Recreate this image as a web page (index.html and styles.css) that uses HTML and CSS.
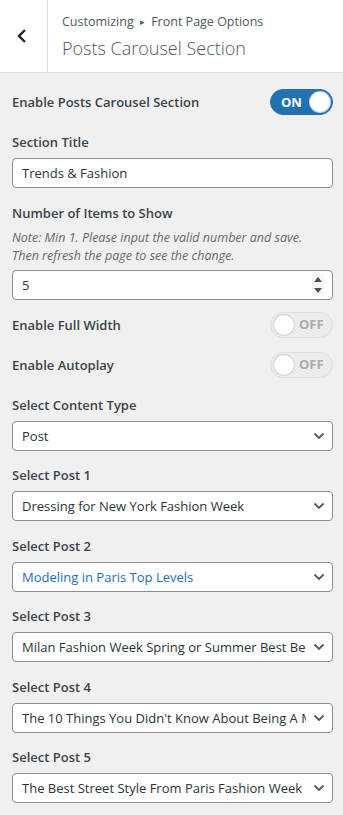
FILE: index.html
```html
<!DOCTYPE html>
<html lang="en">
<head>
    <title>Posts Carousel Section</title>
    <link rel="stylesheet" href="styles.css">
</head>
<body>
    <div class="panel-head">
        <button type="button" class="back-button" aria-label="Back">
            <svg width="12" height="16" viewBox="0 0 12 16"><polyline points="9,2 3,8 9,14" fill="none" stroke="#1d2327" stroke-width="2.4"/></svg>
        </button>
        <div class="panel-title">
            <span class="crumb">Customizing <span class="crumb-arrow">&#9656;</span> Front Page Options</span>
            <h3>Posts Carousel Section</h3>
        </div>
    </div>

    <div class="controls">
        <div class="toggle-row first">
            <span class="control-title">Enable Posts Carousel Section</span>
            <span class="switch on"><span class="switch-text">ON</span><span class="knob"></span></span>
        </div>

        <div class="control">
            <label for="title" class="control-title">Section Title</label>
            <input type="text" id="title" class="form_input" value="Trends &amp; Fashion">
        </div>

        <div class="control tight">
            <label for="items" class="control-title">Number of Items to Show</label>
            <p class="note">Note: Min 1. Please input the valid number and save.<br>Then refresh the page to see the change.</p>
            <div class="field">
                <input type="text" id="items" class="form_input" value="5">
                <span class="spinner"><span class="up"></span><span class="down"></span></span>
            </div>
        </div>

        <div class="toggle-row">
            <span class="control-title">Enable Full Width</span>
            <span class="switch"><span class="knob"></span><span class="switch-text">OFF</span></span>
        </div>

        <div class="toggle-row last">
            <span class="control-title">Enable Autoplay</span>
            <span class="switch"><span class="knob"></span><span class="switch-text">OFF</span></span>
        </div>

        <div class="control">
            <label for="type" class="control-title">Select Content Type</label>
            <div class="field">
                <select id="type" class="form_select"><option>Post</option></select>
                <svg class="chevron" width="12" height="8" viewBox="0 0 12 8"><polyline points="1.5,1.5 6,6 10.5,1.5" fill="none" stroke="#50575e" stroke-width="1.8"/></svg>
            </div>
        </div>

        <div class="control">
            <label for="post1" class="control-title">Select Post 1</label>
            <div class="field">
                <select id="post1" class="form_select"><option>Dressing for New York Fashion Week</option></select>
                <svg class="chevron" width="12" height="8" viewBox="0 0 12 8"><polyline points="1.5,1.5 6,6 10.5,1.5" fill="none" stroke="#50575e" stroke-width="1.8"/></svg>
            </div>
        </div>

        <div class="control">
            <label for="post2" class="control-title">Select Post 2</label>
            <div class="field">
                <select id="post2" class="form_select hover"><option>Modeling in Paris Top Levels</option></select>
                <svg class="chevron" width="12" height="8" viewBox="0 0 12 8"><polyline points="1.5,1.5 6,6 10.5,1.5" fill="none" stroke="#50575e" stroke-width="1.8"/></svg>
            </div>
        </div>

        <div class="control">
            <label for="post3" class="control-title">Select Post 3</label>
            <div class="field">
                <select id="post3" class="form_select"><option>Milan Fashion Week Spring or Summer Best Bets</option></select>
                <svg class="chevron" width="12" height="8" viewBox="0 0 12 8"><polyline points="1.5,1.5 6,6 10.5,1.5" fill="none" stroke="#50575e" stroke-width="1.8"/></svg>
            </div>
        </div>

        <div class="control">
            <label for="post4" class="control-title">Select Post 4</label>
            <div class="field">
                <select id="post4" class="form_select"><option>The 10 Things You Didn't Know About Being A Model</option></select>
                <svg class="chevron" width="12" height="8" viewBox="0 0 12 8"><polyline points="1.5,1.5 6,6 10.5,1.5" fill="none" stroke="#50575e" stroke-width="1.8"/></svg>
            </div>
        </div>

        <div class="control">
            <label for="post5" class="control-title">Select Post 5</label>
            <div class="field">
                <select id="post5" class="form_select"><option>The Best Street Style From Paris Fashion Week</option></select>
                <svg class="chevron" width="12" height="8" viewBox="0 0 12 8"><polyline points="1.5,1.5 6,6 10.5,1.5" fill="none" stroke="#50575e" stroke-width="1.8"/></svg>
            </div>
        </div>
    </div>
</body>
</html>
```

FILE: styles.css
```css
body{
    margin: 0;
    background-color: #f0f0f1;
    font-family: "Open Sans", "Noto Sans", sans-serif;
    color: #3c434a;
}
.panel-head{
    display: flex;
    height: 72px;
    background-color: #fff;
    border-bottom: 1px solid #dcdcde;
}
.back-button{
    width: 48px;
    padding: 0;
    border: none;
    border-right: 1px solid #dcdcde;
    background-color: #fff;
    display: flex;
    align-items: center;
    justify-content: center;
    padding-right: 4px;
}
.panel-title{
    padding: 13px 0 0 14px;
}
.crumb{
    display: block;
    font-size: 12.5px;
    line-height: 18px;
    color: #50575e;
}
.crumb-arrow{
    font-size: 9px;
    vertical-align: 1px;
    margin: 0 3px;
}
.panel-title h3{
    margin: 5px 0 0;
    font-size: 18px;
    line-height: 24px;
    font-weight: 300;
    color: #50575e;
}
.controls{
    padding: 16px 10px 0 12px;
}
.control-title{
    display: block;
    font-size: 13px;
    line-height: 20px;
    font-weight: 600;
    color: #3c434a;
    margin-bottom: 6px;
}
.toggle-row{
    display: flex;
    align-items: center;
    justify-content: space-between;
    height: 26px;
    margin-bottom: 14px;
}
.toggle-row.first{
    margin-bottom: 17px;
}
.toggle-row.last{
    margin-bottom: 17px;
}
.toggle-row .control-title{
    margin-bottom: 0;
}
.switch{
    display: flex;
    align-items: center;
    box-sizing: border-box;
    width: 63px;
    height: 26px;
    padding: 0 3px;
    border-radius: 13px;
    background-color: #ececec;
    border: 1px solid #dedede;
    font-size: 13px;
    font-weight: 700;
    color: #a7aaad;
}
.switch.on{
    background-color: #2271b1;
    border-color: #2271b1;
    color: #fff;
    justify-content: space-between;
    padding: 0 2px 0 10px;
}
.switch-text{
    margin-left: 5px;
    line-height: 1;
}
.switch.on .switch-text{
    margin-left: 0;
}
.knob{
    width: 20px;
    height: 20px;
    border-radius: 50%;
    background-color: #fff;
    box-shadow: 0 0 0 1px #d4d4d4;
}
.switch.on .knob{
    box-shadow: 0 0 0 1px #bcd3e6;
}
.control{
    margin-bottom: 14.5px;
}
.control.tight{
    margin-bottom: 12px;
}
.note{
    margin: 1px 0 5px;
    font-size: 12.5px;
    line-height: 18px;
    font-style: italic;
    color: #646970;
}
.field{
    position: relative;
}
.form_input,
.form_select{
    display: block;
    width: 100%;
    height: 30px;
    box-sizing: border-box;
    padding: 0 26px 0 9px;
    font-family: inherit;
    font-size: 13px;
    color: #2c3338;
    background-color: #fff;
    border: 1px solid #8c8f94;
    border-radius: 4px;
    appearance: none;
    -webkit-appearance: none;
}
.form_select.hover{
    color: #2271b1;
}
.chevron{
    position: absolute;
    right: 8px;
    top: 11px;
    pointer-events: none;
}
.spinner{
    position: absolute;
    right: 9px;
    top: 4px;
    width: 12px;
    height: 22px;
    background-color: #f6f6f6;
    display: flex;
    flex-direction: column;
    align-items: center;
    justify-content: space-around;
}
.spinner .up{
    border-left: 4px solid transparent;
    border-right: 4px solid transparent;
    border-bottom: 5px solid #505050;
}
.spinner .down{
    border-left: 4px solid transparent;
    border-right: 4px solid transparent;
    border-top: 5px solid #505050;
}
```
